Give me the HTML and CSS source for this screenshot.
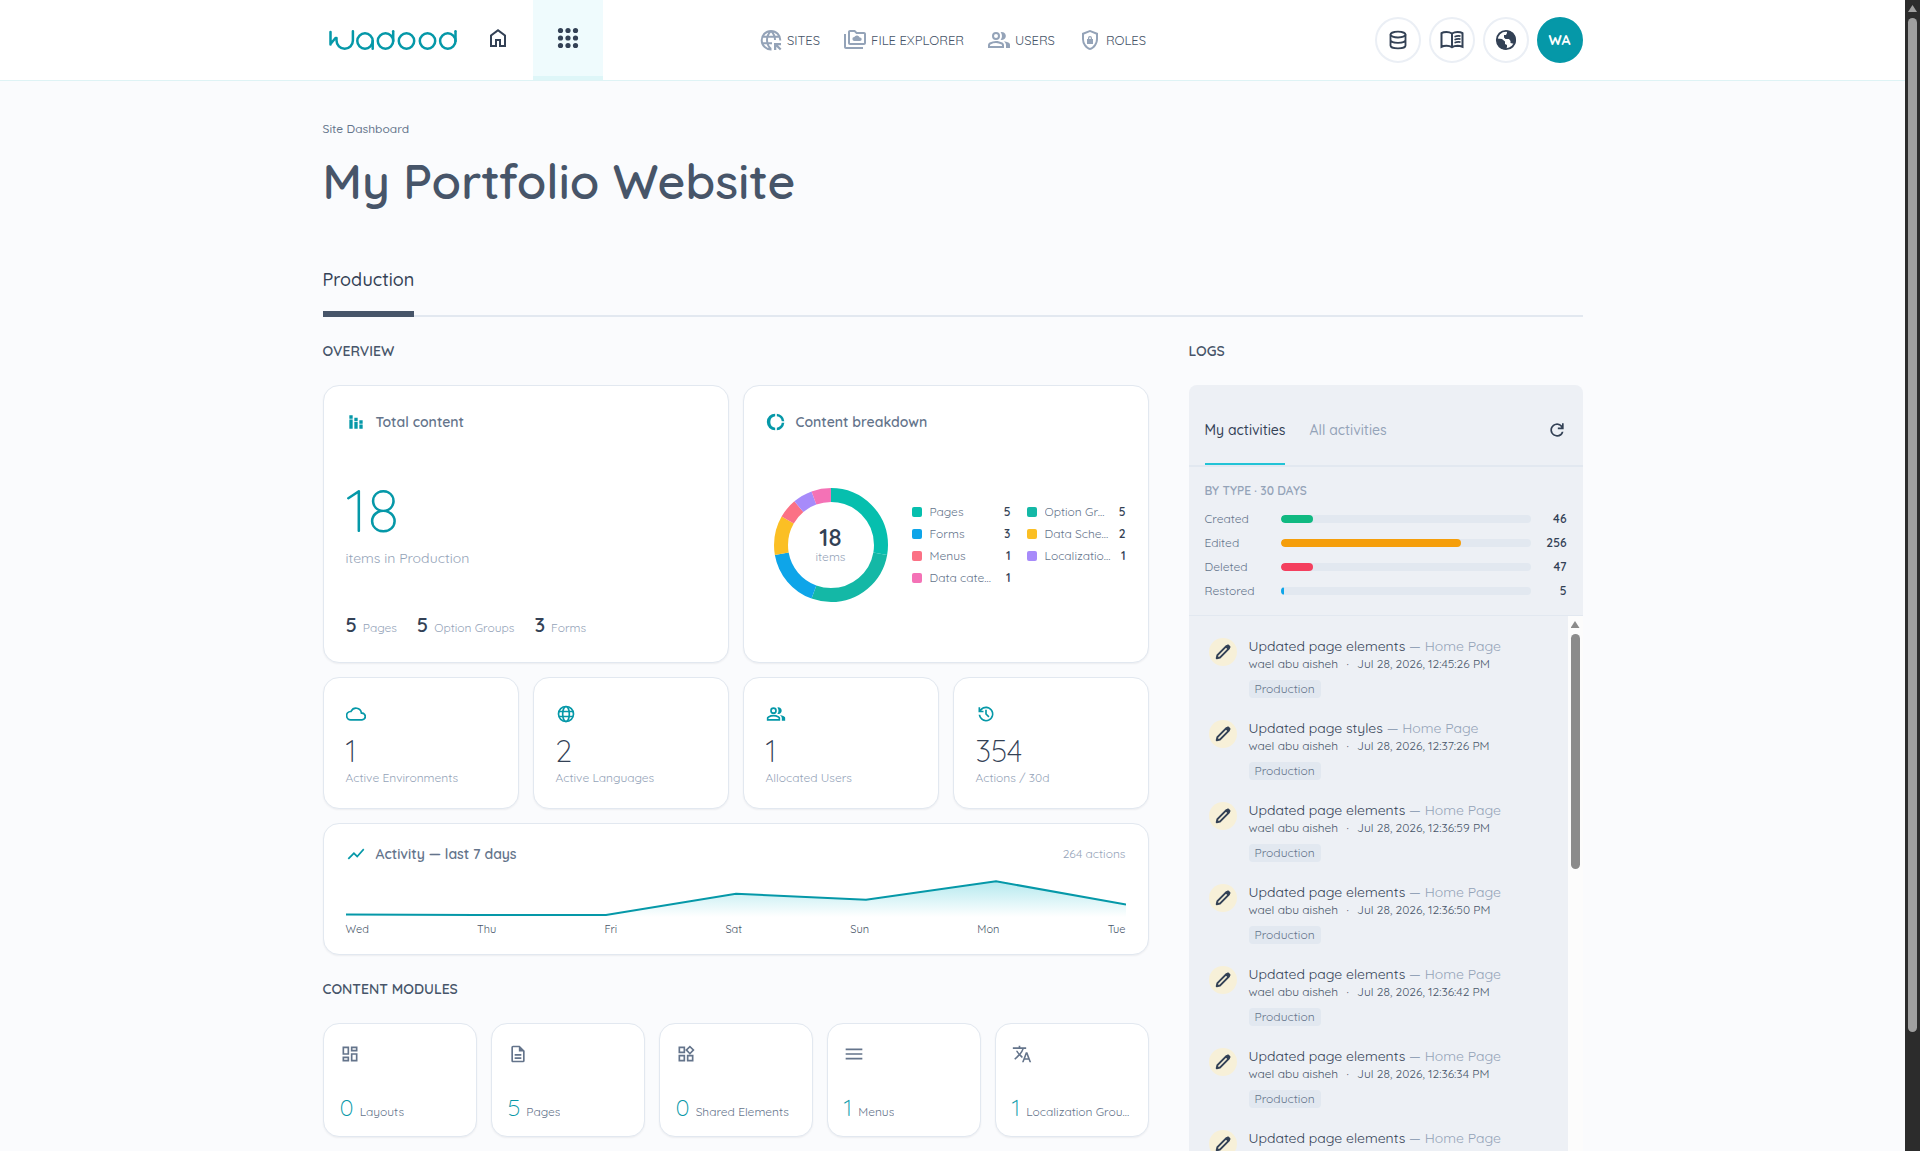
FILE: index.html
```
<!DOCTYPE html>
<html lang="en">
<head>
    <meta charset="UTF-8">
    <meta name="viewport" content="width=device-width, initial-scale=1.0">
    <title>My Portfolio Website - Site Dashboard</title>
    <link rel="stylesheet" href="styles.css">
</head>
<body>
    <!-- shared icons -->
    <svg class="icon-defs" width="0" height="0" aria-hidden="true">
        <symbol id="i-home" viewBox="0 0 24 24"><path d="M6 19h3v-6h6v6h3v-9l-6-4.500L6 10v9zm-2 2V9l8-6 8 6v12h-7v-6h-2v6H4z"/></symbol>
        <symbol id="i-apps" viewBox="0 0 24 24"><circle cx="4.500" cy="4.500" r="2.600"/><circle cx="12" cy="4.500" r="2.600"/><circle cx="19.500" cy="4.500" r="2.600"/><circle cx="4.500" cy="12" r="2.600"/><circle cx="12" cy="12" r="2.600"/><circle cx="19.500" cy="12" r="2.600"/><circle cx="4.500" cy="19.500" r="2.600"/><circle cx="12" cy="19.500" r="2.600"/><circle cx="19.500" cy="19.500" r="2.600"/></symbol>
        <symbol id="i-sites" viewBox="0 0 24 24"><path d="M12.500 21.500A9.300 9.300 0 1 1 21.300 12.500M12 2.900c-2.700 2.500-4 5.500-4 9.100s1.300 6.600 4 9.100M12 2.900c2.700 2.500 4 5.500 4 9.100M3 8.800h18M3 15.200h10" fill="none" stroke="currentColor" stroke-width="2"/><path d="M15 15h7v2.200h-3l3.500 3.500-1.600 1.600-3.600-3.600V22H15z"/></symbol>
        <symbol id="i-folder" viewBox="0 0 24 24"><path d="M3 21c-1.100 0-2-.9-2-2V6h2v13h17v2H3zm4-4c-1.100 0-2-.9-2-2V4c0-1.100.9-2 2-2h5l2 2h7c1.100 0 2 .9 2 2v9c0 1.100-.9 2-2 2H7zm0-2h14V6h-7.800l-2-2H7v11z"/><path d="M11.500 13a2 2 0 0 1-.2-4 2.900 2.900 0 0 1 5.400.6h.3a1.700 1.700 0 0 1 0 3.400z"/></symbol>
        <symbol id="i-users" viewBox="0 0 24 24"><path d="M1 20v-2.800c0-.6.100-1.100.4-1.500.3-.5.700-.8 1.200-1.100A14.800 14.800 0 0 1 9 13c2.200 0 4.300.5 6.400 1.600.5.300.9.600 1.200 1.100.3.400.4.900.4 1.500V20H1zm18 0v-3c0-.7-.2-1.400-.6-2.100-.4-.7-1-1.200-1.700-1.700 1.700.2 3.200.7 4.700 1.400.5.300.9.600 1.200 1 .3.400.4.900.4 1.400v3h-4zM9 12a4 4 0 1 1 0-8 4 4 0 0 1 0 8zm6 0-1.400-.2A5.700 5.700 0 0 0 15 8a5.700 5.700 0 0 0-1.400-3.800A4 4 0 1 1 15 12zM3 18h12v-.8c0-.4-.2-.7-.5-.8A12.400 12.400 0 0 0 9 15c-1.900 0-3.700.5-5.500 1.400-.3.100-.5.400-.5.800v.8zm6-8a2 2 0 1 0 0-4 2 2 0 0 0 0 4z"/></symbol>
        <symbol id="i-roles" viewBox="0 0 24 24"><path d="M12 22c-2.300-.6-4.200-1.900-5.700-4A11.300 11.300 0 0 1 4 11.100V5l8-3 8 3v6.100c0 2.500-.8 4.800-2.300 6.900-1.500 2.100-3.400 3.400-5.700 4zm0-2.100a8 8 0 0 0 4.300-3.300A9.200 9.200 0 0 0 18 11.100V6.400l-6-2.300-6 2.300v4.700c0 2 .6 3.900 1.700 5.500a8 8 0 0 0 4.300 3.300z"/><path d="M9 16v-5h1v-1a2 2 0 0 1 4 0v1h1v5zm2.200-5h1.600v-1a.8.8 0 0 0-1.600 0z"/></symbol>
        <symbol id="i-db" viewBox="0 0 24 24"><g fill="none" stroke="currentColor" stroke-width="2.200"><ellipse cx="12" cy="5.500" rx="9" ry="3.500"/><path d="M3 5.500v13c0 2 4 3.500 9 3.500s9-1.500 9-3.500v-13M3 12c0 2 4 3.500 9 3.500s9-1.500 9-3.500" stroke-linejoin="round"/></g></symbol>
        <symbol id="i-book" viewBox="0 0 24 24"><path d="M12 19.200C10.500 18.200 8.500 17.700 6.500 17.700c-2 0-3.700.4-5 1.100V5.200C2.700 4.400 4.500 4 6.500 4c2 0 3.900.5 5.500 1.500C13.600 4.500 15.500 4 17.500 4c2 0 3.800.4 5 1.200v13.600a13.500 13.500 0 0 0-5-1.100c-2 0-4 .5-5.500 1.500zM12 6v12" fill="none" stroke="currentColor" stroke-width="2"/><path d="M14.500 8.700c2-.8 4-1 6-.6M14.500 11.700c2-.8 4-1 6-.6M14.500 14.700c2-.8 4-1 6-.6" fill="none" stroke="currentColor" stroke-width="1.600"/></symbol>
        <symbol id="i-world" viewBox="0 0 24 24"><circle cx="12" cy="12" r="9.200" fill="none" stroke="currentColor" stroke-width="1.800"/><path d="M13 2.500V5l-1 2h-2v2.500l1.500 1.500h3.500l1.500 2v2l2 .5 2.500.5A9.500 9.500 0 0 0 13 2.500zM2.700 10.500L8 11l3 2.500V16l2 1v2l-1 2.500a9.500 9.500 0 0 1-9.300-11z"/></symbol>
        <symbol id="i-stack" viewBox="0 0 24 24"><path d="M4 9h4v11H4zM4 4h4v4H4zM10 7h4v4h-4zM16 10h4v4h-4zM16 15h4v5h-4zM10 12h4v8h-4z"/></symbol>
        <symbol id="i-ring" viewBox="0 0 24 24"><path d="M11 5.100V2a10 10 0 0 0 0 20v-3.100a7 7 0 0 1 0-13.800zM18.900 11H22A10 10 0 0 0 13 2v3.100a7 7 0 0 1 5.900 5.900zM13 18.900V22a10 10 0 0 0 9-9h-3.100a7 7 0 0 1-5.900 5.900z"/></symbol>
        <symbol id="i-cloud" viewBox="0 0 24 24"><path d="M19.400 10A7.500 7.500 0 0 0 5.400 8 6 6 0 0 0 6 20h13a5 5 0 0 0 .4-10zM19 18H6a4 4 0 0 1-.4-8l1-.1.500-1a5.500 5.500 0 0 1 10.300 1.500l.3 1.500 1.500.1A3 3 0 0 1 19 18z"/></symbol>
        <symbol id="i-globe" viewBox="0 0 24 24"><g fill="none" stroke="currentColor" stroke-width="2"><circle cx="12" cy="12" r="9"/><ellipse cx="12" cy="12" rx="4" ry="9"/><path d="M3.500 9h17M3.500 15h17"/></g></symbol>
        <symbol id="i-history" viewBox="0 0 24 24"><path d="M12 21a9 9 0 0 1-8.900-8h2a7 7 0 1 0 1.400-5.200L6.200 8H9v2H3V4h2v2.300A9 9 0 1 1 12 21zm2.800-4.800L11 12.400V7h2v4.600l3.200 3.200z"/></symbol>
        <symbol id="i-trend" viewBox="0 0 24 24"><path d="M3.500 18.500l6-6 4 4L22 6.900 20.600 5.500l-7.100 8-4-4L2 17z"/></symbol>
        <symbol id="i-refresh" viewBox="0 0 24 24"><path d="M12 20a8 8 0 1 1 6-13.300V4h2v7h-7V9h4.200A6 6 0 1 0 17.700 14h2.100A8 8 0 0 1 12 20z"/></symbol>
        <symbol id="i-pencil" viewBox="0 0 24 24"><path d="M4.500 19.500l.8-3.800L16 5l3 3L8.300 18.700z" fill="none" stroke="currentColor" stroke-width="2.400" stroke-linejoin="round"/><path d="M14.500 5.800l2.300-2.200c.7-.7 1.700-.7 2.400 0l1.300 1.300c.7.700.7 1.700 0 2.400l-2.200 2.200z"/></symbol>
        <symbol id="i-layout" viewBox="0 0 24 24"><path d="M3 3h8v10H3zM5 5v6h4V5zM13 3h8v6h-8zM15 5v2h4V5zM13 11h8v10h-8zM15 13v6h4v-6zM3 15h8v6H3zM5 17v2h4v-2z" fill-rule="evenodd"/></symbol>
        <symbol id="i-page" viewBox="0 0 24 24"><path d="M8 16h8v2H8zM8 12h8v2H8zM14 2H6a2 2 0 0 0-2 2v16c0 1.100.9 2 2 2h12a2 2 0 0 0 2-2V8zM18 20H6V4h7v5h5z"/></symbol>
        <symbol id="i-shared" viewBox="0 0 24 24"><path d="M3 3h8v8H3zM5 5v4h4V5zM3 13h8v8H3zM5 15v4h4v-4zM13 13h8v8h-8zM15 15v4h4v-4zM16.700 1.700l5.600 5.600-5.600 5.700L11 7.300zM16.700 4.500l-2.800 2.800 2.800 2.900 2.800-2.900z" fill-rule="evenodd"/></symbol>
        <symbol id="i-menu" viewBox="0 0 24 24"><path d="M2 5.500h20v2H2zM2 11h20v2H2zM2 16.500h20v2H2z"/></symbol>
        <symbol id="i-translate" viewBox="0 0 24 24"><path d="M12.900 15.100l-2.600-2.500a17.500 17.500 0 0 0 3.800-6.600H17V4h-7V2H8v2H1v2h11.200A15.700 15.700 0 0 1 9 11.400 15.600 15.600 0 0 1 6.700 8h-2a17.600 17.600 0 0 0 3 4.600l-5.100 5L4 19l5-5 3.100 3.100zM18.500 10h-2L12 22h2l1.100-3h4.800l1.100 3h2zm-2.600 7l1.600-4.300 1.600 4.300z"/></symbol>
    </svg>

    <div class="page">
        <header class="topbar">
            <div class="topbar-inner">
                <div class="topbar-left">
                    <a href="#" class="logo" aria-label="Wadood">
                        <svg viewBox="0 0 128 20" width="128" height="20">
                            <g fill="none" stroke="currentColor" stroke-width="2.500" stroke-linecap="round">
                                <path d="M1.500 2v12.500M1.500 14l5-6"/>
                                <path d="M7.500 8v2.500a8.200 8.200 0 0 0 16.400 0V1.300"/>
                                <circle cx="36" cy="11" r="7.700"/><path d="M43.700 11v7.700"/>
                                <circle cx="56.500" cy="11" r="7.700"/><path d="M64.200 11V1.300"/>
                                <circle cx="77.500" cy="11" r="7.700"/>
                                <circle cx="98.500" cy="11" r="7.700"/>
                                <circle cx="118.800" cy="11" r="7.700"/><path d="M126.500 11V1.300"/>
                            </g>
                        </svg>
                    </a>
                    <a href="#" class="home" aria-label="Home"><svg class="icon-lg"><use href="#i-home"/></svg></a>
                    <button type="button" class="apps" aria-label="Apps"><svg class="icon-lg"><use href="#i-apps"/></svg></button>
                </div>
                <nav class="main-nav">
                    <a href="#"><svg class="icon-lg"><use href="#i-sites"/></svg>SITES</a>
                    <a href="#"><svg class="icon-lg"><use href="#i-folder"/></svg>FILE EXPLORER</a>
                    <a href="#"><svg class="icon-lg"><use href="#i-users"/></svg>USERS</a>
                    <a href="#"><svg class="icon-lg"><use href="#i-roles"/></svg>ROLES</a>
                </nav>
                <div class="topbar-right">
                    <button type="button" class="round" aria-label="Data"><svg class="icon"><use href="#i-db"/></svg></button>
                    <button type="button" class="round" aria-label="Docs"><svg class="icon-lg"><use href="#i-book"/></svg></button>
                    <button type="button" class="round" aria-label="Language"><svg class="icon-lg"><use href="#i-world"/></svg></button>
                    <button type="button" class="round avatar">WA</button>
                </div>
            </div>
        </header>

        <main class="container">
            <p class="crumb">Site Dashboard</p>
            <h1>My Portfolio Website</h1>

            <div class="env-tabs">
                <button type="button" class="env-tab">Production</button>
            </div>

            <div class="columns">
                <div class="main-col">
                    <h2>OVERVIEW</h2>
                    <div class="overview">
                        <section class="card card-half total">
                            <h3><svg class="icon"><use href="#i-stack"/></svg>Total content</h3>
                            <div class="total-body">
                                <div class="total-number">18</div>
                                <div class="total-label">items in Production</div>
                            </div>
                            <div class="total-split">
                                <span><b>5</b>Pages</span>
                                <span><b>5</b>Option Groups</span>
                                <span><b>3</b>Forms</span>
                            </div>
                        </section>

                        <section class="card card-half breakdown">
                            <h3><svg class="icon"><use href="#i-ring"/></svg>Content breakdown</h3>
                            <div class="breakdown-body">
                                <div class="donut">
                                    <svg viewBox="0 0 130 130" width="130" height="130">
                                        <g fill="none" stroke-width="14" transform="rotate(-90 65 65)">
                                            <circle cx="65" cy="65" r="50" pathLength="18" stroke="#06bfae" stroke-dasharray="5 13"/>
                                            <circle cx="65" cy="65" r="50" pathLength="18" stroke="#14b8a6" stroke-dasharray="5 13" stroke-dashoffset="-5"/>
                                            <circle cx="65" cy="65" r="50" pathLength="18" stroke="#0ea5e9" stroke-dasharray="3 15" stroke-dashoffset="-10"/>
                                            <circle cx="65" cy="65" r="50" pathLength="18" stroke="#fbbf24" stroke-dasharray="2 16" stroke-dashoffset="-13"/>
                                            <circle cx="65" cy="65" r="50" pathLength="18" stroke="#fb7185" stroke-dasharray="1 17" stroke-dashoffset="-15"/>
                                            <circle cx="65" cy="65" r="50" pathLength="18" stroke="#a78bfa" stroke-dasharray="1 17" stroke-dashoffset="-16"/>
                                            <circle cx="65" cy="65" r="50" pathLength="18" stroke="#f472b6" stroke-dasharray="1 17" stroke-dashoffset="-17"/>
                                        </g>
                                    </svg>
                                    <div class="donut-text"><strong>18</strong><span>items</span></div>
                                </div>
                                <ul class="legend">
                                    <li><i class="sw sw-pages"></i><span>Pages</span><b>5</b></li>
                                    <li><i class="sw sw-options"></i><span>Option Groups</span><b>5</b></li>
                                    <li><i class="sw sw-forms"></i><span>Forms</span><b>3</b></li>
                                    <li><i class="sw sw-schemas"></i><span>Data Schemas</span><b>2</b></li>
                                    <li><i class="sw sw-menus"></i><span>Menus</span><b>1</b></li>
                                    <li><i class="sw sw-local"></i><span>Localization Groups</span><b>1</b></li>
                                    <li><i class="sw sw-data"></i><span>Data categories</span><b>1</b></li>
                                </ul>
                            </div>
                        </section>

                        <section class="card stat">
                            <svg class="icon"><use href="#i-cloud"/></svg>
                            <div class="stat-number">1</div>
                            <div class="stat-label">Active Environments</div>
                        </section>
                        <section class="card stat">
                            <svg class="icon"><use href="#i-globe"/></svg>
                            <div class="stat-number">2</div>
                            <div class="stat-label">Active Languages</div>
                        </section>
                        <section class="card stat">
                            <svg class="icon"><use href="#i-users"/></svg>
                            <div class="stat-number">1</div>
                            <div class="stat-label">Allocated Users</div>
                        </section>
                        <section class="card stat">
                            <svg class="icon"><use href="#i-history"/></svg>
                            <div class="stat-number">354</div>
                            <div class="stat-label">Actions / 30d</div>
                        </section>

                        <section class="card card-full activity">
                            <div class="activity-head">
                                <h3><svg class="icon"><use href="#i-trend"/></svg>Activity — last 7 days</h3>
                                <span>264 actions</span>
                            </div>
                            <svg class="chart" viewBox="0 0 780 44" preserveAspectRatio="none">
                                <defs>
                                    <linearGradient id="area" x1="0" y1="0" x2="0" y2="1">
                                        <stop offset="0" stop-color="#06b6c8" stop-opacity=".3"/>
                                        <stop offset="1" stop-color="#06b6c8" stop-opacity="0"/>
                                    </linearGradient>
                                </defs>
                                <path d="M0 39.500L130 40H260L390 18.700 520 24.700 650 6.300 780 29.500V42H0z" fill="url(#area)"/>
                                <path d="M0 39.500L130 40H260L390 18.700 520 24.700 650 6.300 780 29.500" fill="none" stroke="#0598a8" stroke-width="2"/>
                            </svg>
                            <div class="days"><span>Wed</span><span>Thu</span><span>Fri</span><span>Sat</span><span>Sun</span><span>Mon</span><span>Tue</span></div>
                        </section>
                    </div>

                    <h2>CONTENT MODULES</h2>
                    <div class="modules">
                        <a href="#" class="card module"><svg class="icon"><use href="#i-layout"/></svg><span class="module-text"><b>0</b><span>Layouts</span></span></a>
                        <a href="#" class="card module"><svg class="icon"><use href="#i-page"/></svg><span class="module-text"><b>5</b><span>Pages</span></span></a>
                        <a href="#" class="card module"><svg class="icon"><use href="#i-shared"/></svg><span class="module-text"><b>0</b><span>Shared Elements</span></span></a>
                        <a href="#" class="card module"><svg class="icon"><use href="#i-menu"/></svg><span class="module-text"><b>1</b><span>Menus</span></span></a>
                        <a href="#" class="card module"><svg class="icon"><use href="#i-translate"/></svg><span class="module-text"><b>1</b><span>Localization Groups</span></span></a>
                    </div>
                </div>

                <aside class="logs-col">
                    <h2>LOGS</h2>
                    <div class="logs">
                        <div class="log-tabs">
                            <button type="button" class="log-tab active">My activities</button>
                            <button type="button" class="log-tab">All activities</button>
                            <button type="button" class="refresh" aria-label="Refresh"><svg class="icon"><use href="#i-refresh"/></svg></button>
                        </div>
                        <div class="by-type">
                            <h4>BY TYPE · 30 DAYS</h4>
                            <div class="type-row"><span>Created</span><div class="track"><div class="fill created" style="width: 13%"></div></div><b>46</b></div>
                            <div class="type-row"><span>Edited</span><div class="track"><div class="fill edited" style="width: 72%"></div></div><b>256</b></div>
                            <div class="type-row"><span>Deleted</span><div class="track"><div class="fill deleted" style="width: 13%"></div></div><b>47</b></div>
                            <div class="type-row"><span>Restored</span><div class="track"><div class="fill restored" style="width: 1.4%"></div></div><b>5</b></div>
                        </div>
                        <div class="log-body">
                            <ul class="log-list">
                                <li>
                                    <span class="log-icon"><svg class="icon"><use href="#i-pencil"/></svg></span>
                                    <div><p class="log-title">Updated page elements <span>— Home Page</span></p><p class="log-meta">wael abu aisheh <i>·</i> Jul 28, 2026, 12:45:26 PM</p><span class="chip">Production</span></div>
                                </li>
                                <li>
                                    <span class="log-icon"><svg class="icon"><use href="#i-pencil"/></svg></span>
                                    <div><p class="log-title">Updated page styles <span>— Home Page</span></p><p class="log-meta">wael abu aisheh <i>·</i> Jul 28, 2026, 12:37:26 PM</p><span class="chip">Production</span></div>
                                </li>
                                <li>
                                    <span class="log-icon"><svg class="icon"><use href="#i-pencil"/></svg></span>
                                    <div><p class="log-title">Updated page elements <span>— Home Page</span></p><p class="log-meta">wael abu aisheh <i>·</i> Jul 28, 2026, 12:36:59 PM</p><span class="chip">Production</span></div>
                                </li>
                                <li>
                                    <span class="log-icon"><svg class="icon"><use href="#i-pencil"/></svg></span>
                                    <div><p class="log-title">Updated page elements <span>— Home Page</span></p><p class="log-meta">wael abu aisheh <i>·</i> Jul 28, 2026, 12:36:50 PM</p><span class="chip">Production</span></div>
                                </li>
                                <li>
                                    <span class="log-icon"><svg class="icon"><use href="#i-pencil"/></svg></span>
                                    <div><p class="log-title">Updated page elements <span>— Home Page</span></p><p class="log-meta">wael abu aisheh <i>·</i> Jul 28, 2026, 12:36:42 PM</p><span class="chip">Production</span></div>
                                </li>
                                <li>
                                    <span class="log-icon"><svg class="icon"><use href="#i-pencil"/></svg></span>
                                    <div><p class="log-title">Updated page elements <span>— Home Page</span></p><p class="log-meta">wael abu aisheh <i>·</i> Jul 28, 2026, 12:36:34 PM</p><span class="chip">Production</span></div>
                                </li>
                                <li>
                                    <span class="log-icon"><svg class="icon"><use href="#i-pencil"/></svg></span>
                                    <div><p class="log-title">Updated page elements <span>— Home Page</span></p></div>
                                </li>
                            </ul>
                            <div class="scrollbar"><span class="arrow-up"></span><span class="thumb"></span></div>
                        </div>
                    </div>
                </aside>
            </div>
        </main>
    </div>
    <div class="scrollbar scrollbar-dark"><span class="arrow-up"></span><span class="thumb"></span></div>
</body>
</html>
```
FILE: styles.css
```
* {
    box-sizing: border-box;
}
body {
    display: flex;
    height: 100vh;
    margin: 0;
    overflow: hidden;
    background: #fafbfd;
    color: #334155;
    font-family: Quicksand, Lato, sans-serif;
    font-size: 14px;
    line-height: 20px;
}
h1, h2, h3, h4, p, ul {
    margin: 0;
    padding: 0;
}
h1, h2, h3, h4 {
    font-weight: 600;
}
ul {
    list-style: none;
}
i {
    font-style: normal;
}
a {
    color: inherit;
    text-decoration: none;
}
button {
    padding: 0;
    border: none;
    background: none;
    color: inherit;
    font: inherit;
    cursor: pointer;
}
svg {
    display: block;
    flex: none;
    fill: currentColor;
}
.icon-defs {
    position: absolute;
}
.icon {
    width: 20px;
    height: 20px;
}
.icon-lg {
    width: 24px;
    height: 24px;
}
.page {
    flex: 1;
    min-width: 0;
}

/* top bar */
.topbar {
    background: #ffffff;
    border-bottom: 1px solid #def3f5;
}
.topbar-inner {
    display: grid;
    grid-template-columns: 1fr auto 1fr;
    align-items: center;
    max-width: 1260px;
    height: 80px;
    margin: 0 auto;
}
.topbar-left {
    display: flex;
    align-items: center;
    height: 80px;
}
.logo {
    margin-left: 6px;
    color: #0598a8;
}
.home {
    margin: 0 23px 4px 29px;
}
.apps {
    display: flex;
    justify-content: center;
    align-items: center;
    width: 70px;
    height: 80px;
    background: #effbfd;
    border-bottom: 4px solid #def6f8;
}
.main-nav {
    display: flex;
    gap: 23px;
    font-size: 13px;
    color: #475569;
}
.main-nav a {
    display: flex;
    align-items: center;
    gap: 4px;
}
.main-nav svg {
    color: #94a3b8;
}
.topbar-right {
    display: flex;
    justify-content: flex-end;
    gap: 8px;
}
.round {
    display: flex;
    justify-content: center;
    align-items: center;
    width: 46px;
    height: 46px;
    border: 2px solid #ebeff5;
    border-radius: 50%;
}
.avatar {
    border-color: #0598a8;
    background: #0598a8;
    color: #ffffff;
    font-weight: 700;
}

/* heading */
.container {
    max-width: 1260px;
    margin: 0 auto;
    padding-top: 38px;
}
.crumb {
    font-size: 12px;
    font-weight: 500;
    color: #64748b;
}
h1 {
    margin-top: 10px;
    font-size: 48px;
    line-height: 64px;
    color: #475569;
}
.env-tabs {
    display: flex;
    margin-top: 50px;
    border-bottom: 2px solid #e2e8f0;
}
.env-tab {
    height: 54px;
    margin-bottom: -2px;
    padding-bottom: 14px;
    border-bottom: 6px solid #475569;
    font-size: 18px;
    font-weight: 500;
    line-height: 28px;
}

/* layout */
.columns {
    display: grid;
    grid-template-columns: 1fr 394px;
    gap: 40px;
    margin-top: 24px;
}
.main-col {
    min-width: 0;
}
h2 {
    font-size: 14px;
    color: #475569;
}
.overview {
    display: grid;
    grid-template-columns: repeat(4, 1fr);
    gap: 14px;
    margin: 24px 0;
}
.card {
    min-width: 0;
    padding: 22px;
    background: #ffffff;
    border: 1px solid #e2e8f0;
    border-radius: 16px;
    box-shadow: 0 1px 2px rgba(15, 23, 42, 0.06);
}
.card-half {
    display: flex;
    flex-direction: column;
    grid-column: span 2;
    height: 278px;
    padding-bottom: 24px;
}
.card-full {
    grid-column: span 4;
}
h3 {
    display: flex;
    align-items: center;
    gap: 10px;
    font-size: 14px;
    color: #64748b;
}
h3 svg {
    color: #0598a8;
}
.card-half h3 {
    padding-top: 4px;
}
.total-body {
    display: flex;
    flex: 1;
    flex-direction: column;
    justify-content: center;
}
.total-number {
    font-size: 60px;
    font-weight: 300;
    line-height: 60px;
    color: #0598a8;
}
.total-label {
    margin-top: 8px;
    color: #94a3b8;
}
.total-split {
    display: flex;
    gap: 20px;
    font-size: 12px;
    color: #94a3b8;
}
.total-split b {
    margin-right: 6px;
    font-size: 20px;
    font-weight: 600;
    color: #334155;
}
.breakdown-body {
    display: flex;
    flex: 1;
    align-items: center;
    gap: 16px;
    padding-top: 20px;
}
.donut {
    display: grid;
    place-items: center;
}
.donut > * {
    grid-area: 1 / 1;
}
.donut-text {
    display: flex;
    flex-direction: column;
    align-items: center;
    font-size: 12px;
    line-height: 16px;
    color: #94a3b8;
}
.donut-text strong {
    font-size: 24px;
    font-weight: 600;
    line-height: 24px;
    color: #334155;
}
.legend {
    display: grid;
    flex: 1;
    grid-template-columns: 1fr 1fr;
    gap: 2px 16px;
    min-width: 0;
}
.legend li {
    display: flex;
    align-items: center;
    gap: 8px;
    min-width: 0;
    font-size: 12px;
    color: #64748b;
}
.legend span {
    flex: 1;
    overflow: hidden;
    text-overflow: ellipsis;
    white-space: nowrap;
}
.legend b {
    font-weight: 600;
    color: #334155;
}
.sw {
    width: 10px;
    height: 10px;
    border-radius: 2px;
}
.sw-pages { background: #06bfae; }
.sw-options { background: #14b8a6; }
.sw-forms { background: #0ea5e9; }
.sw-schemas { background: #fbbf24; }
.sw-menus { background: #fb7185; }
.sw-local { background: #a78bfa; }
.sw-data { background: #f472b6; }

/* stats */
.stat {
    padding-top: 26px;
}
.stat svg {
    color: #0598a8;
}
.stat-number {
    margin-top: 8px;
    font-size: 30px;
    font-weight: 300;
    line-height: 38px;
}
.stat-label {
    font-size: 12px;
    line-height: 16px;
    color: #94a3b8;
}

/* activity */
.activity {
    padding-top: 20px;
    padding-bottom: 15px;
}
.activity-head {
    display: flex;
    justify-content: space-between;
    font-size: 12px;
    color: #94a3b8;
}
.chart {
    width: 100%;
    height: 44px;
    margin-top: 11px;
}
.days {
    display: flex;
    justify-content: space-between;
    font-size: 11px;
    color: #475569;
}

/* modules */
.modules {
    display: grid;
    grid-template-columns: repeat(5, 1fr);
    gap: 14px;
    margin-top: 24px;
}
.module {
    display: flex;
    flex-direction: column;
    justify-content: space-between;
    height: 114px;
    padding: 20px 16px 14px;
    color: #64748b;
}
.module-text {
    display: flex;
    align-items: baseline;
    gap: 6px;
    font-size: 12px;
}
.module-text b {
    font-size: 24px;
    font-weight: 300;
    color: #0598a8;
}
.module-text span {
    overflow: hidden;
    text-overflow: ellipsis;
    white-space: nowrap;
}

/* logs */
.logs {
    margin-top: 24px;
    overflow: hidden;
    background: #edf0f5;
    border-radius: 8px 8px 0 0;
}
.log-tabs {
    display: flex;
    gap: 24px;
    height: 82px;
    padding: 12px 16px 0;
    border-bottom: 2px solid #e2e8f0;
    font-weight: 500;
}
.log-tab {
    border-bottom: 2px solid transparent;
    color: #94a3b8;
}
.log-tab.active {
    border-color: #22c3d6;
    color: #334155;
}
.refresh {
    margin-left: auto;
    padding-bottom: 2px;
}
.by-type {
    display: flex;
    flex-direction: column;
    gap: 4px;
    padding: 14px 16px;
    border-bottom: 1px solid #e2e8f0;
}
h4 {
    margin-bottom: 4px;
    font-size: 12px;
    color: #94a3b8;
}
.type-row {
    display: grid;
    grid-template-columns: 64px 1fr 24px;
    gap: 12px;
    align-items: center;
    font-size: 12px;
    color: #64748b;
}
.type-row b {
    font-weight: 600;
    text-align: right;
    color: #334155;
}
.track {
    height: 8px;
    overflow: hidden;
    background: #e2e8f0;
    border-radius: 4px;
}
.fill {
    height: 8px;
    border-radius: 4px;
}
.created { background: #10b981; }
.edited { background: #f59e0b; }
.deleted { background: #f43f5e; }
.restored { background: #0ea5e9; }
.log-body {
    display: flex;
    height: 700px;
    overflow: hidden;
}
.log-list {
    flex: 1;
    padding: 20px;
}
.log-list li {
    display: flex;
    gap: 12px;
    margin-bottom: 20px;
}
.log-icon {
    display: grid;
    place-items: center;
    width: 28px;
    height: 28px;
    margin-top: 2px;
    background: #f7f0d8;
    border-radius: 50%;
}
.log-title span {
    color: #94a3b8;
}
.log-meta {
    font-size: 12px;
    line-height: 16px;
    color: #475569;
}
.log-meta i {
    margin: 0 5px;
}
.chip {
    display: block;
    width: fit-content;
    margin-top: 8px;
    padding: 0 6px;
    background: #e2e8f0;
    border-radius: 4px;
    font-size: 12px;
    line-height: 18px;
    color: #64748b;
}

/* scrollbars */
.scrollbar {
    display: flex;
    flex: none;
    flex-direction: column;
    align-items: center;
    gap: 6px;
    width: 15px;
    padding-top: 5px;
    background: #fcfcfc;
}
.arrow-up {
    width: 9px;
    height: 7px;
    background: #8b8b8b;
    clip-path: polygon(50% 0, 100% 100%, 0 100%);
}
.thumb {
    width: 9px;
    height: 235px;
    background: #8b8b8b;
    border-radius: 5px;
}
.scrollbar-dark {
    height: 100vh;
    background: #2c2c2c;
}
.scrollbar-dark .arrow-up {
    background: #9f9f9f;
}
.scrollbar-dark .thumb {
    height: 1014px;
    background: #9f9f9f;
}
```
